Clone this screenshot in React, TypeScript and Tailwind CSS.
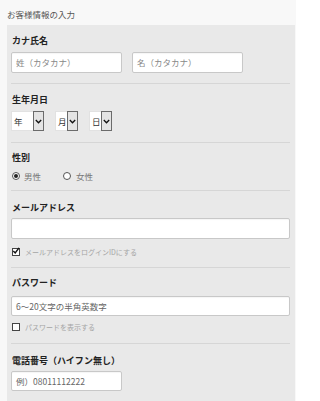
import React from "react";

const font = { fontFamily: '"Noto Sans CJK JP", "Noto Sans", sans-serif' };

function Label({ children }: { children: React.ReactNode }) {
  return (
    <div className="h-[14px] leading-[14px] pl-[1px] text-[9px] font-bold text-[#222]">{children}</div>
  );
}

function TextBox({ w, h, text, dark }: { w: string; h: string; text?: string; dark?: boolean }) {
  return (
    <div
      className={`${w} ${h} bg-white border border-[#c8c8c8] rounded-[2px] flex items-center pl-[4px] text-[8.5px] ${dark ? "text-[#666]" : "text-[#888]"} shadow-[inset_0_1px_1px_rgba(0,0,0,0.04)]`}
    >
      {text}
    </div>
  );
}

function Chevron() {
  return (
    <svg width="7" height="5" viewBox="0 0 7 5">
      <path d="M0.8 1 L3.5 3.8 L6.2 1" fill="none" stroke="#111" strokeWidth="1.3" />
    </svg>
  );
}

function Select({ w, text }: { w: string; text: string }) {
  return (
    <div className={`${w} h-[20px] flex bg-white`}>
      <div className="flex-1 flex items-center pl-[2px] text-[8.5px] text-[#333] border-y border-l border-[#e2e2e2]">
        {text}
      </div>
      <div className="w-[11px] h-full bg-[#e4e4e4] border border-[#6b6b6b] flex items-center justify-center">
        <Chevron />
      </div>
    </div>
  );
}

function Radio({ checked }: { checked?: boolean }) {
  return (
    <div className="w-[8px] h-[8px] rounded-full border border-[#555] bg-white flex items-center justify-center">
      {checked && <div className="w-[4px] h-[4px] rounded-full bg-[#222]" />}
    </div>
  );
}

function Check({ checked }: { checked?: boolean }) {
  return (
    <div className="w-[8px] h-[8px] border-[1.5px] border-[#444] bg-white relative">
      {checked && (
        <svg className="absolute left-[-1px] top-[-2px]" width="8" height="8" viewBox="0 0 8 8">
          <path d="M1.3 4 L3.2 6 L7 0.8" fill="none" stroke="#111" strokeWidth="1.4" />
        </svg>
      )}
    </div>
  );
}

export default function App() {
  return (
    <div className="w-[296px] h-[401px] bg-[#f8f8f8] overflow-hidden" style={font}>
      <div className="h-[25px] pl-[7px] pt-[7px] leading-[14px] text-[8.5px] text-[#555]">お客様情報の入力</div>
      <div className="ml-[7px] mr-[1px] h-[376px] bg-[#e9e9e9] pl-[4px] pr-[5px]">
        <div className="pt-[9px] pb-[10px] border-b border-[#d6d6d6]">
          <Label>カナ氏名</Label>
          <div className="mt-[4px] flex gap-[10px]">
            <TextBox w="w-[111px]" h="h-[21px]" text="姓（カタカナ）" />
            <TextBox w="w-[111px]" h="h-[21px]" text="名（カタカナ）" />
          </div>
        </div>
        <div className="pt-[9px] pb-[11px] border-b border-[#d6d6d6]">
          <Label>生年月日</Label>
          <div className="mt-[4px] flex">
            <Select w="w-[33px]" text="年" />
            <div className="w-[11px]" />
            <Select w="w-[23px]" text="月" />
            <div className="w-[11px]" />
            <Select w="w-[23px]" text="日" />
          </div>
        </div>
        <div className="pt-[8px] pb-[7px] border-b border-[#d6d6d6]">
          <Label>性別</Label>
          <div className="mt-[4px] h-[14px] flex items-center text-[8.5px] text-[#777] pl-[1px]">
            <Radio checked />
            <span className="ml-[4px]">男性</span>
            <div className="ml-[22px]">
              <Radio />
            </div>
            <span className="ml-[5px]">女性</span>
          </div>
        </div>
        <div className="pt-[10px] pb-[9px] border-b border-[#d6d6d6]">
          <Label>メールアドレス</Label>
          <div className="mt-[3px]">
            <TextBox w="w-full" h="h-[21px]" />
          </div>
          <div className="mt-[7px] h-[12px] flex items-center pl-[1px] text-[7px] text-[#a5a5a5]">
            <Check checked />
            <span className="ml-[5px]">メールアドレスをログインIDにする</span>
          </div>
        </div>
        <div className="pt-[8px] pb-[10px] border-b border-[#d6d6d6]">
          <Label>パスワード</Label>
          <div className="mt-[6px]">
            <TextBox w="w-full" h="h-[20px]" text="6～20文字の半角英数字" dark />
          </div>
          <div className="mt-[5px] h-[12px] flex items-center pl-[1px] text-[7px] text-[#a5a5a5]">
            <Check />
            <span className="ml-[5px]">パスワードを表示する</span>
          </div>
        </div>
        <div className="pt-[10px]">
          <Label>電話番号（ハイフン無し）</Label>
          <div className="mt-[3px]">
            <TextBox w="w-[111px]" h="h-[20px]" text="例）08011112222" dark />
          </div>
        </div>
      </div>
    </div>
  );
}
